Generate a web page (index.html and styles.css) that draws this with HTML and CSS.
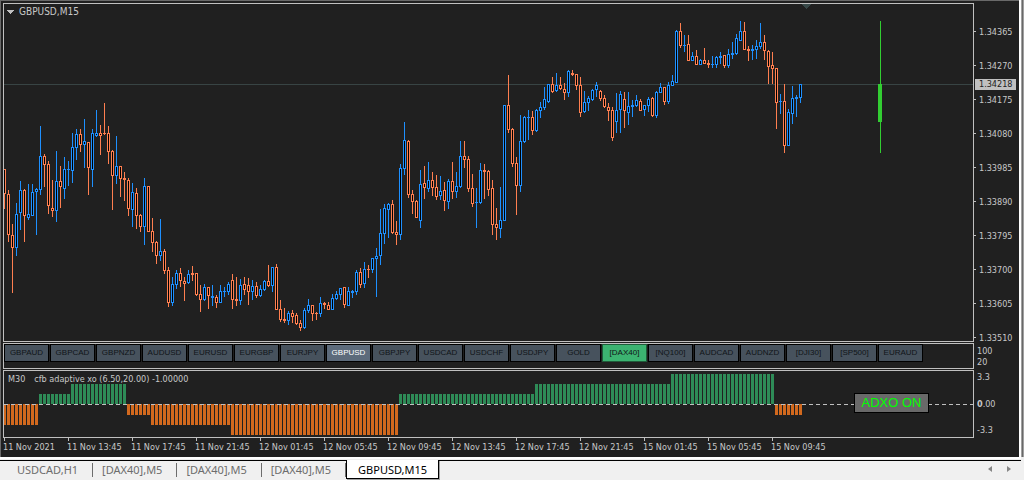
FILE: index.html
```
<!DOCTYPE html>
<html lang="en">
<head>
<meta charset="utf-8">
<title>GBPUSD,M15</title>
<link rel="stylesheet" href="styles.css">
</head>
<body>

<div class="window">
    <div class="row">
        <div class="plot plot-main">
            <svg id="price-chart" class="canvas" shape-rendering="crispEdges">
                <line class="bid-line" x1="0" y1="80.5" x2="100%" y2="80.5"/>
                <path class="shift-mark" d="M798 0h9l-4.5 5z"/>
                <g id="candles"></g>
                <path class="day-candle" d="M876.5 17v132"/>
                <rect class="day-body" x="874" y="80" width="4" height="38"/>
            </svg>
            <h1 class="symbol"><svg width="7" height="4" shape-rendering="crispEdges"><path d="M0 0h7v1h-1v1h-1v1h-1v1h-1v-1h-1v-1h-1v-1h-1z"/></svg>GBPUSD,M15</h1>
        </div>
        <div class="scale scale-price">
            <ul>
                <li>1.34365</li>
                <li>1.34270</li>
                <li>1.34175</li>
                <li>1.34080</li>
                <li>1.33985</li>
                <li>1.33890</li>
                <li>1.33795</li>
                <li>1.33700</li>
                <li>1.33605</li>
                <li>1.33510</li>
            </ul>
            <span class="bid">1.34218</span>
        </div>
    </div>

    <div class="row">
        <div class="plot symbols">
            <button>GBPAUD</button>
            <button>GBPCAD</button>
            <button>GBPNZD</button>
            <button>AUDUSD</button>
            <button>EURUSD</button>
            <button>EURGBP</button>
            <button>EURJPY</button>
            <button class="current">GBPUSD</button>
            <button>GBPJPY</button>
            <button>USDCAD</button>
            <button>USDCHF</button>
            <button>USDJPY</button>
            <button>GOLD</button>
            <button class="signal">[DAX40]</button>
            <button>[NQ100]</button>
            <button>AUDCAD</button>
            <button>AUDNZD</button>
            <button>[DJI30]</button>
            <button>[SP500]</button>
            <button>EURAUD</button>
        </div>
        <div class="scale scale-symbols">
            <ul>
                <li>100</li>
                <li>20</li>
            </ul>
        </div>
    </div>

    <div class="row">
        <div class="plot plot-cfb">
            <svg id="cfb-chart" class="canvas" shape-rendering="crispEdges">
                <g id="bars"></g>
                <line class="zero-line" x1="0" y1="33.5" x2="100%" y2="33.5"/>
            </svg>
            <p class="indicator"><span>M30</span><span>cfb adaptive xo (6.50,20.00) -1.00000</span></p>
            <button class="adxo">ADXO ON</button>
        </div>
        <div class="scale scale-cfb">
            <ul>
                <li>3.3</li>
                <li><b>0</b>.00</li>
                <li>-3.3</li>
            </ul>
        </div>
    </div>

    <ul class="times">
        <li>11 Nov 2021</li>
        <li>11 Nov 13:45</li>
        <li>11 Nov 17:45</li>
        <li>11 Nov 21:45</li>
        <li>12 Nov 01:45</li>
        <li>12 Nov 05:45</li>
        <li>12 Nov 09:45</li>
        <li>12 Nov 13:45</li>
        <li>12 Nov 17:45</li>
        <li>12 Nov 21:45</li>
        <li>15 Nov 01:45</li>
        <li>15 Nov 05:45</li>
        <li>15 Nov 09:45</li>
    </ul>
</div>

<nav class="tabs">
    <a href="#">USDCAD,H1</a>
    <a href="#">[DAX40],M5</a>
    <a href="#">[DAX40],M5</a>
    <a href="#">[DAX40],M5</a>
    <a href="#" class="active">GBPUSD,M15</a>
    <div class="arrows">
        <button aria-label="Previous"><svg width="4" height="6"><path d="M4 0v6L0 3z"/></svg></button>
        <button aria-label="Next"><svg width="4" height="6"><path d="M0 0v6l4-3z"/></svg></button>
    </div>
</nav>

<script src="chart.js"></script>
</body>
</html>
```
FILE: styles.css
```
* {
    box-sizing: border-box;
}
body {
    margin: 0;
    min-height: 100vh;
    display: flex;
    flex-direction: column;
    background: #f0f0f0;
    font-family: "DejaVu Sans Condensed", "DejaVu Sans", sans-serif;
    font-size: 9px;
    color: #c8c8c8;
}
ul, h1, p {
    margin: 0;
    padding: 0;
    list-style: none;
    font-size: 9px;
    font-weight: normal;
}
button {
    padding: 0;
    margin: 0;
    font-family: "Liberation Sans", Arial, sans-serif;
}
.window {
    flex: 1;
    background: #202020;
    border-top: 1px solid #696969;
    border-left: 1px solid #696969;
    margin-right: 5px;
    padding: 2px 0 0 2px;
    box-shadow: 2px 0 #ffffff, 3px 0 #a0a0a0, 4px 0 #696969, 5px 0 #a0a0a0;
}
.row {
    display: flex;
    margin-bottom: 1px;
}
.plot {
    flex: 1;
    position: relative;
    border: 1px solid #c0c0c0;
    overflow: hidden;
}
.canvas {
    display: block;
    width: 100%;
    height: 100%;
}
.plot-main {
    height: 339px;
}
.symbols {
    height: 26px;
    display: flex;
    align-items: flex-start;
    gap: 1px;
}
.plot-cfb {
    height: 68px;
}

/* price chart */
.bid-line {
    stroke: #384444;
}
.shift-mark {
    fill: #384848;
}
.up {
    stroke: #1e90ff;
}
.down {
    stroke: #ff7f50;
}
#candles rect {
    fill: #000000;
}
.day-candle {
    stroke: #32cd32;
}
.day-body {
    fill: #32cd32;
}
.symbol {
    position: absolute;
    top: 2px;
    left: 3px;
    display: flex;
    align-items: center;
    gap: 5px;
    font-size: 10px;
    line-height: 12px;
}
.symbol svg {
    fill: #c0c0c0;
}

/* right scales */
.scale {
    position: relative;
    width: 45px;
}
.scale li {
    position: relative;
    padding-left: 5px;
}
.scale-price ul {
    padding-top: 12px;
    height: 339px;
}
.scale-price li {
    line-height: 34px;
}
.scale-price li::before {
    content: "";
    position: absolute;
    left: 0;
    top: 16px;
    width: 2px;
    height: 1px;
    background: #c0c0c0;
}
.bid {
    position: absolute;
    left: 1px;
    top: 76px;
    width: 41px;
    padding-left: 4px;
    line-height: 11px;
    background: #c0c0c0;
    color: #202020;
}
.scale-symbols ul {
    padding-top: 3px;
}
.scale-symbols li {
    padding-left: 3px;
    line-height: 11px;
}
.scale-cfb ul {
    height: 68px;
    display: flex;
    flex-direction: column;
    justify-content: space-between;
    padding: 1px 0;
}
.scale-cfb li {
    padding-left: 3px;
    line-height: 13px;
}

/* symbol buttons */
.symbols button {
    width: 45px;
    height: 18px;
    border: 1px solid #000000;
    background: #47525d;
    color: #101418;
    font-size: 8px;
    line-height: 16px;
}
.symbols .current {
    background: #5d6b7b;
    color: #ffffff;
}
.symbols .signal {
    background: #3cb371;
    border-color: #1f5c3a;
}

/* indicator */
.long {
    fill: #2e8b57;
}
.short {
    fill: #d2691e;
}
.zero-line {
    stroke: #c0c0c0;
    stroke-dasharray: 4 3;
}
.indicator {
    position: absolute;
    top: 2px;
    left: 4px;
    display: flex;
    gap: 9px;
    line-height: 13px;
}
.adxo {
    position: absolute;
    top: 22px;
    left: 850px;
    width: 75px;
    height: 20px;
    border: 1px solid #000000;
    background: #696969;
    color: #00ff00;
    font-size: 13px;
    line-height: 18px;
}

.times {
    display: flex;
    margin-top: -1px;
    height: 19px;
    overflow: hidden;
}
.times li {
    flex: 0 0 64px;
    position: relative;
    padding-top: 2px;
    line-height: 14px;
    white-space: nowrap;
}
.times li::before {
    content: "";
    position: absolute;
    left: 1px;
    top: 0;
    width: 1px;
    height: 3px;
    background: #c0c0c0;
}

/* chart tabs */
.tabs {
    position: relative;
    display: flex;
    height: 25px;
    padding: 3px 0 2px 8px;
    border-bottom: 2px solid #ffffff;
    font-family: "Noto Sans", "Open Sans", sans-serif;
    font-size: 11px;
}
.tabs::before {
    content: "";
    position: absolute;
    left: 0;
    right: 3px;
    top: 0;
    height: 1px;
    border-top: 2px solid #ffffff;
    border-bottom: 1px solid #000000;
}
.tabs a {
    position: relative;
    padding: 0 15px 0 9px;
    height: 19px;
    line-height: 19px;
    color: #6d6d6d;
    text-decoration: none;
}
.tabs a:not(.active)::after {
    content: "";
    position: absolute;
    right: 0;
    top: 3px;
    width: 1px;
    height: 14px;
    background: #6d6d6d;
}
.tabs .active {
    padding: 0 11px;
    background: #ffffff;
    border: 1px solid #000000;
    border-top: 0;
    color: #000000;
    box-shadow: 1px 1px #a0a0a0;
}
.arrows {
    margin-left: auto;
    display: flex;
    align-items: center;
    gap: 15px;
    padding-right: 13px;
}
.arrows button {
    display: flex;
    border: 0;
    background: none;
}
.arrows svg {
    fill: #858585;
}
```
FILE: chart.js
```
const STEP = 4;
const SVG = "http://www.w3.org/2000/svg";

// direction, high, body top, body bottom, low (pixels from the top of the window)
const candles = `
d169,169,194,209 d190,194,235,242 d224,235,248,293 u203,214,248,256 u181,190,213,230
d189,190,216,242 u184,214,218,220 u184,192,216,216 u188,189,192,235 u126,156,190,195
d154,156,165,187 d161,164,206,214 d180,208,211,217 u151,181,211,222 d166,181,187,208
u157,169,189,199 u161,169,170,186 u133,147,171,183 u129,134,148,160 d129,134,145,152
u119,141,145,168 d142,142,168,195 u129,133,170,187 u110,133,136,137 d125,133,136,155
d103,133,134,135 d126,133,152,164 d150,151,176,210 u136,166,176,184 d166,166,179,197
d172,178,180,201 d178,180,209,216 u183,192,210,227 d188,193,216,229 d214,215,227,232
u178,186,227,245 d186,186,232,232 d218,231,243,252 d241,242,256,264 u219,251,256,261
d249,251,271,274 d267,270,303,307 u277,284,303,306 u270,273,285,289 d268,273,281,287
d277,281,284,301 u270,274,283,284 d266,273,275,281 d273,273,295,296 d285,294,300,312
u284,287,300,301 d287,287,296,309 u285,296,298,306 d295,297,303,308 u285,291,303,303
u287,291,292,297 u282,284,292,295 d274,280,300,309 d277,299,301,306 u279,285,301,305
d277,284,290,295 d278,285,292,305 u280,286,292,300 d282,286,296,298 u285,289,296,297
u280,281,290,291 d265,281,286,287 u267,267,286,292 d264,267,310,310 d300,309,320,322
d308,319,321,323 u311,313,321,325 d310,313,317,323 d313,315,324,325 d320,323,328,331
u308,310,328,329 u299,305,311,313 d305,305,314,321 d312,313,314,320 u297,303,314,317
d302,303,305,309 d302,305,310,310 u294,298,310,310 u291,294,299,300 u288,288,295,300
d287,287,305,308 u287,291,306,306 u290,291,293,298 u270,272,292,295 d268,272,285,288
u262,269,284,288 d265,269,270,278 u258,258,270,273 u248,256,259,297 u209,233,256,265
u204,208,234,244 u203,204,210,238 d200,204,233,234 d221,232,235,245 u164,168,235,240
u122,140,169,175 d140,141,195,198 d190,194,202,214 d200,201,218,218 u170,184,221,228
d166,183,188,199 u162,180,189,192 d172,180,188,196 d175,187,197,200 u176,191,196,200
d182,190,201,211 u179,181,202,209 d162,181,192,199 u172,186,192,198 u141,156,187,188
d141,156,160,168 d156,159,189,192 d174,188,204,207 u188,202,203,228 u163,170,203,204
d164,170,172,199 d170,171,190,196 d180,188,225,235 d208,224,228,240 u187,220,229,238
u105,105,221,221 d75,105,130,133 d128,129,164,167 d157,163,186,215 u115,141,186,192
u116,117,142,143 u110,117,118,140 d111,117,131,135 u109,110,131,132 u102,107,111,118
u87,99,108,110 u84,84,102,103 d77,84,92,93 u73,85,91,92 d77,85,89,90
d83,89,93,100 u70,71,93,97 d70,73,75,76 d74,74,86,90 d77,85,113,117
u91,102,112,113 u96,98,103,111 u89,90,100,101 u82,85,90,97 d90,91,99,101
d95,98,107,108 d103,107,111,121 d107,110,138,141 u93,110,122,133 u91,94,110,133
d92,99,111,128 u92,106,113,125 u100,105,107,117 u95,100,106,107 d99,101,111,111
u105,105,110,116 u97,99,106,112 d97,98,116,117 u91,92,116,118 u83,87,93,93
d87,87,102,105 u82,85,102,104 u75,81,86,86 u30,31,83,83 d23,31,46,48
u35,45,46,52 d35,44,61,61 u52,56,61,61 d50,56,65,65 u59,60,65,65
d48,60,64,64 d60,63,65,68 u56,64,65,68 u56,57,65,68 u52,56,58,64
d55,55,66,68 u49,54,66,68 u42,53,55,59 u34,38,54,55 u21,31,41,41
d22,31,50,50 d46,49,51,61 u45,49,51,60 u40,46,50,59 u23,42,47,49
d35,42,51,60 d50,51,67,84 d52,65,69,84 d68,68,103,129 u94,101,102,114
d84,101,146,153 u109,112,146,146 u86,98,114,124 u95,97,99,117 u84,84,98,103
`.trim().split(/\s+/);

// value and number of bars
const levels = [[-2, 9], [1, 8], [2, 14], [-1, 6], [-2, 20], [-3, 42], [1, 34], [2, 34], [3, 26], [-1, 7]];

function add(parent, name, attrs) {
    const el = document.createElementNS(SVG, name);
    for (const key in attrs) {
        el.setAttribute(key, attrs[key]);
    }
    parent.appendChild(el);
}

const candleLayer = document.getElementById("candles");
candleLayer.setAttribute("transform", "translate(0 -4)");

candles.forEach((item, i) => {
    const cls = item[0] === "u" ? "up" : "down";
    const [high, top, bottom, low] = item.slice(1).split(",").map(Number);
    const x = i * STEP;
    add(candleLayer, "path", { class: cls, d: `M${x + 0.5} ${high}V${low}` });
    if (bottom - top < 3) {
        add(candleLayer, "path", { class: cls, d: `M${x - 1} ${(top + bottom) / 2}h3`, "stroke-width": bottom - top });
    } else {
        add(candleLayer, "rect", { class: cls, x: x - 0.5, y: top + 0.5, width: 2, height: bottom - top - 1 });
    }
});

const barLayer = document.getElementById("bars");
let n = 0;
levels.forEach(([value, count]) => {
    const height = Math.abs(value) * 10 + (value < 0 ? 1 : 0);
    for (let k = 0; k < count; k++) {
        add(barLayer, "rect", {
            class: value > 0 ? "long" : "short",
            x: n * STEP - 1,
            y: value > 0 ? 33 - height : 33,
            width: 3,
            height: height
        });
        n++;
    }
});
```
